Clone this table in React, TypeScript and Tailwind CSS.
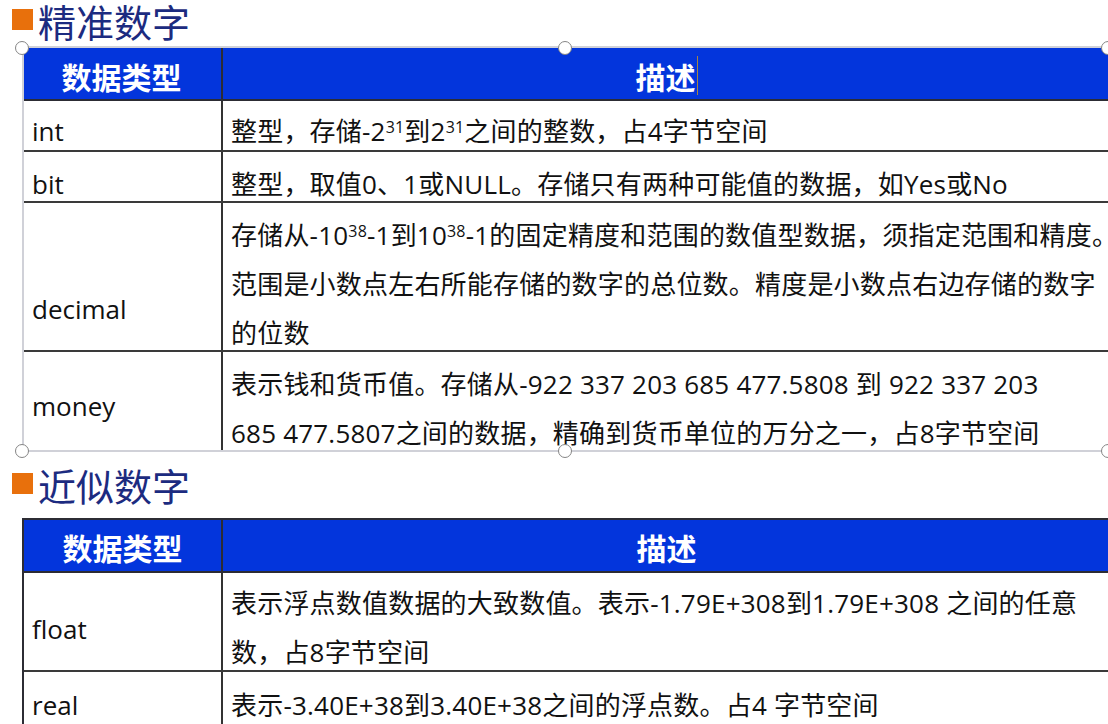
import type { ReactNode } from 'react';

interface Row {
  type: string;
  height: number;
  /** padding above the type label */
  typeTop: number;
  /** padding above the first description line */
  descTop: number;
  lines: ReactNode[];
}

const Sup = ({ children }: { children: ReactNode }) => (
  <sup className="text-[16px]">{children}</sup>
);

const exactRows: Row[] = [
  {
    type: 'int',
    height: 51,
    typeTop: 6,
    descTop: 6,
    lines: [
      <>
        整型，存储-2<Sup>31</Sup>到2<Sup>31</Sup>之间的整数，占4字节空间
      </>,
    ],
  },
  {
    type: 'bit',
    height: 51,
    typeTop: 8,
    descTop: 8,
    lines: ['整型，取值0、1或NULL。存储只有两种可能值的数据，如Yes或No'],
  },
  {
    type: 'decimal',
    height: 149,
    typeTop: 82,
    descTop: 8,
    lines: [
      <>
        存储从-10<Sup>38</Sup>-1到10<Sup>38</Sup>-1的固定精度和范围的数值型数据，须指定范围和精度。
      </>,
      '范围是小数点左右所能存储的数字的总位数。精度是小数点右边存储的数字',
      '的位数',
    ],
  },
  {
    type: 'money',
    height: 99,
    typeTop: 30,
    descTop: 8,
    lines: [
      '表示钱和货币值。存储从-922 337 203 685 477.5808 到 922 337 203',
      '685 477.5807之间的数据，精确到货币单位的万分之一，占8字节空间',
    ],
  },
];

const approxRows: Row[] = [
  {
    type: 'float',
    height: 99,
    typeTop: 32,
    descTop: 6,
    lines: [
      '表示浮点数值数据的大致数值。表示-1.79E+308到1.79E+308 之间的任意',
      '数，占8字节空间',
    ],
  },
  {
    type: 'real',
    height: 60,
    typeTop: 9,
    descTop: 9,
    lines: ['表示-3.40E+38到3.40E+38之间的浮点数。占4 字节空间'],
  },
];

function SectionTitle({ text, className }: { text: string; className: string }) {
  return (
    <div className={`flex items-center pl-[12px] ${className}`}>
      <span className="mb-[3px] h-[21px] w-[21px] shrink-0 bg-[#e8700c]" />
      <span className="ml-[5px] font-['Noto_Sans_CJK_SC',sans-serif] text-[38px] leading-[42px] text-[#1c2b80]">
        {text}
      </span>
    </div>
  );
}

function HeaderRow({ firstWidth, headTop, cursor }: { firstWidth: string; headTop: string; cursor?: boolean }) {
  return (
    <div className="flex h-[53px] border-b-2 border-[#2c2c34] bg-[#0335dc] font-['Noto_Sans_CJK_SC',sans-serif] text-[30px] font-bold leading-[30px] text-white">
      <div className={`flex shrink-0 items-center justify-center border-r-2 border-[#2c2c34] ${firstWidth} ${headTop}`}>
        数据类型
      </div>
      <div className={`flex flex-1 items-center justify-center ${headTop}`}>
        <span>描述</span>
        {cursor && <span className="ml-px h-[39px] w-px bg-[#a58445]" />}
      </div>
    </div>
  );
}

function BodyRow({ row, last, firstWidth, typePad }: { row: Row; last: boolean; firstWidth: string; typePad: string }) {
  return (
    <div
      className={`flex overflow-hidden ${last ? '' : 'border-b-2 border-[#3a3a3a]'}`}
      style={{ height: row.height }}
    >
      <div className={`shrink-0 border-r-2 border-[#333] ${firstWidth} ${typePad}`} style={{ paddingTop: row.typeTop }}>
        {row.type}
      </div>
      <div className="flex-1 pl-[8px] tracking-[0.2px]" style={{ paddingTop: row.descTop }}>
        {row.lines.map((line, i) => (
          <div key={i} className="whitespace-nowrap">
            {line}
          </div>
        ))}
      </div>
    </div>
  );
}

const handleSpots = [
  'left-[-7px] top-[-7px]',
  'left-[536px] top-[-7px]',
  'left-[1079px] top-[-7px]',
  'left-[-7px] top-[396px]',
  'left-[536px] top-[396px]',
  'left-[1079px] top-[396px]',
];

export default function App() {
  return (
    <div className="h-[724px] w-[1108px] overflow-hidden bg-white font-['Open_Sans','Noto_Sans_CJK_SC',sans-serif] text-[26px] leading-[49px] text-[#111]">
      <SectionTitle text="精准数字" className="h-[42px]" />

      {/* selected table: light frame + handles drawn over it */}
      <div className="relative ml-[22px] mt-[6px] w-[1088px]">
        <HeaderRow firstWidth="w-[201px]" headTop="pt-[4px]" cursor />
        {exactRows.map((row, i) => (
          <BodyRow
            key={row.type}
            row={row}
            last={i === exactRows.length - 1}
            firstWidth="w-[201px]"
            typePad="pl-[10px]"
          />
        ))}
        <div className="pointer-events-none absolute left-0 top-[-2px] h-[406px] w-[1086px] border-2 border-r-0 border-[#d0d1d8]" />
        {handleSpots.map((spot) => (
          <span
            key={spot}
            className={`pointer-events-none absolute h-[14px] w-[14px] rounded-full border-[1.5px] border-[#858585] bg-white ${spot}`}
          />
        ))}
      </div>

      <SectionTitle text="近似数字" className="h-[67px]" />

      <div className="ml-[22px] w-[1088px] border-l-2 border-t-2 border-[#2c2c34]">
        <HeaderRow firstWidth="w-[199px]" headTop="pt-[2px]" />
        {approxRows.map((row, i) => (
          <BodyRow
            key={row.type}
            row={row}
            last={i === approxRows.length - 1}
            firstWidth="w-[199px]"
            typePad="pl-[8px]"
          />
        ))}
      </div>
    </div>
  );
}
